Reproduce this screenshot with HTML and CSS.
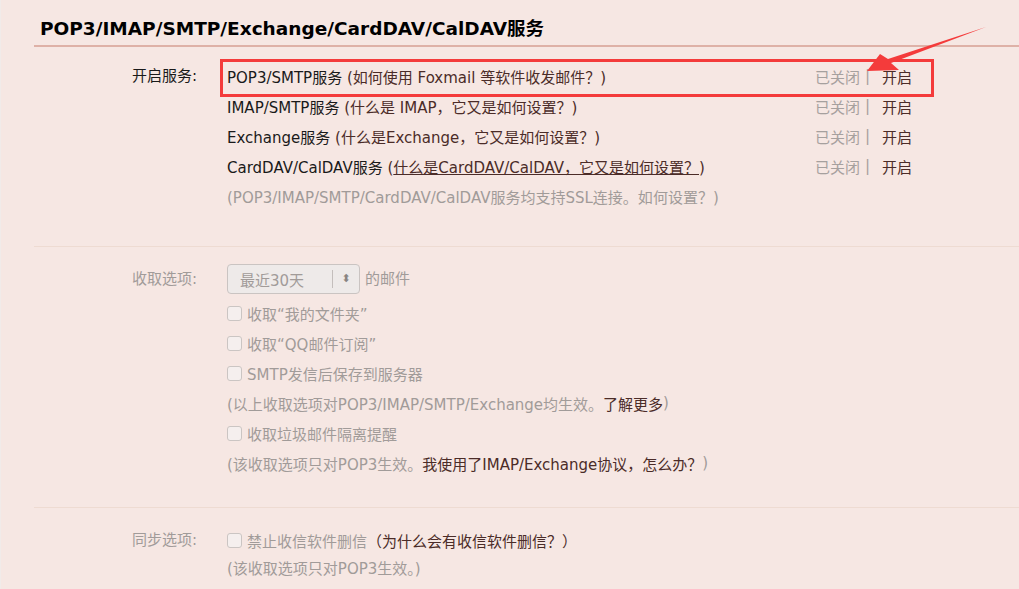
FILE: index.html
```html
<!DOCTYPE html>
<html lang="zh-CN">
<head>
  <meta charset="UTF-8">
  <link rel="stylesheet" href="styles.css">
  <title>POP3/IMAP/SMTP/Exchange/CardDAV/CalDAV服务</title>
</head>
<body>
  <div class="page">
    <h2 class="title">POP3/IMAP/SMTP/Exchange/CardDAV/CalDAV服务</h2>

    <!-- 开启服务 -->
    <div class="section">
      <div class="label">开启服务:</div>
      <div class="content">
        <div class="row">
          <span class="name">POP3/SMTP服务 <a class="link">(如何使用 Foxmail 等软件收发邮件？)</a></span>
          <span class="status"><span class="off">已关闭</span><span class="sep">|</span><a class="link">开启</a></span>
        </div>
        <div class="row">
          <span class="name">IMAP/SMTP服务 <a class="link">(什么是 IMAP，它又是如何设置？)</a></span>
          <span class="status"><span class="off">已关闭</span><span class="sep">|</span><a class="link">开启</a></span>
        </div>
        <div class="row">
          <span class="name">Exchange服务 <a class="link">(什么是Exchange，它又是如何设置？)</a></span>
          <span class="status"><span class="off">已关闭</span><span class="sep">|</span><a class="link">开启</a></span>
        </div>
        <div class="row">
          <span class="name">CardDAV/CalDAV服务 <a class="link">(<u>什么是CardDAV/CalDAV，它又是如何设置？</u>)</a></span>
          <span class="status"><span class="off">已关闭</span><span class="sep">|</span><a class="link">开启</a></span>
        </div>
        <div class="row note">(POP3/IMAP/SMTP/CardDAV/CalDAV服务均支持SSL连接。如何设置？)</div>
      </div>
    </div>

    <!-- 收取选项 -->
    <div class="section dim">
      <div class="label">收取选项:</div>
      <div class="content">
        <div class="row tall">
          <span class="select"><span class="select-text">最近30天</span><span class="select-arrow">&#x2B0D;</span></span>
          <span class="after">的邮件</span>
        </div>
        <div class="row"><span class="check"></span>收取“我的文件夹”</div>
        <div class="row"><span class="check"></span>收取“QQ邮件订阅”</div>
        <div class="row"><span class="check"></span>SMTP发信后保存到服务器</div>
        <div class="row">(以上收取选项对POP3/IMAP/SMTP/Exchange均生效。<a class="link">了解更多</a>)</div>
        <div class="row"><span class="check"></span>收取垃圾邮件隔离提醒</div>
        <div class="row">(该收取选项只对POP3生效。<a class="link">我使用了IMAP/Exchange协议，怎么办？</a>)</div>
      </div>
    </div>

    <!-- 同步选项 -->
    <div class="section dim last">
      <div class="label">同步选项:</div>
      <div class="content">
        <div class="row"><span class="check"></span>禁止收信软件删信<a class="link">（为什么会有收信软件删信？）</a></div>
        <div class="row short">(该收取选项只对POP3生效。)</div>
      </div>
    </div>
  </div>

  <!-- annotation -->
  <div class="mark"></div>
  <svg class="pointer" width="1019" height="120" viewBox="0 0 1019 120">
    <polygon points="867,71 880,54 888,59 986,27 891,63 899,70" fill="#f43b3b"/>
  </svg>
</body>
</html>
```

FILE: styles.css
```css
body {
  margin: 0;
  background: #f6e7e3;
  font-family: "DejaVu Sans", "Noto Sans CJK SC", sans-serif;
  font-size: 15px;
  color: #1a1a1a;
  border-left: 1px solid #f1ebe9;
  height: 589px;
  overflow: hidden;
}

.page {
  padding-left: 33px;
}

.title {
  margin: 0;
  padding: 14px 0 0 6px;
  height: 31px;
  font-size: 18.5px;
  font-weight: bold;
  color: #000;
  border-bottom: 2px solid #deb1a7;
}

.section {
  display: flex;
  padding: 14px 0 35px;
  border-bottom: 1px solid #eedbd2;
}

.section.dim {
  padding: 17px 0 29px;
  color: #a19b99;
}

.section.last {
  border-bottom: none;
  padding-top: 17px;
}

.label {
  width: 193px;
  text-align: right;
  padding-right: 30px;
  line-height: 30px;
  box-sizing: border-box;
  color: #1a1a1a;
}

.dim .label {
  color: #a19b99;
}

.content {
  width: 685px;
}

.row {
  display: flex;
  align-items: center;
  height: 30px;
  white-space: nowrap;
}

.row.tall {
  height: 34px;
  align-items: flex-start;
}

.row.tall .after {
  line-height: 30px;
}

.row.short {
  height: 24px;
}

.name {
  flex: 1;
}

.link {
  color: #4b2c28;
}

.link u {
  text-decoration-color: #4b2c28;
}

.status {
  display: flex;
  align-items: center;
}

.off {
  color: #a6a09e;
}

.sep {
  color: #a6a09e;
  margin: 0 12px 0 5px;
}

.note {
  color: #a19b99;
}

.select {
  display: flex;
  align-items: center;
  width: 133px;
  height: 30px;
  box-sizing: border-box;
  border: 1px solid #cac4c2;
  border-radius: 4px;
  background: #eeeae9;
}

.select-text {
  flex: 1;
  padding-left: 12px;
  color: #a19b99;
}

.select-arrow {
  width: 26px;
  border-left: 1px solid #c4bebc;
  line-height: 18px;
  text-align: center;
  font-size: 11px;
  color: #8a8482;
}

.after {
  margin-left: 5px;
}

.check {
  width: 15px;
  height: 15px;
  box-sizing: border-box;
  border: 1px solid #cbc5c3;
  border-radius: 3px;
  background: #f5efee;
  margin-right: 5px;
}

.mark {
  position: absolute;
  left: 220px;
  top: 59px;
  width: 714px;
  height: 38px;
  box-sizing: border-box;
  border: 3px solid #f43b3b;
}

.pointer {
  position: absolute;
  left: 0;
  top: 0;
}
```
